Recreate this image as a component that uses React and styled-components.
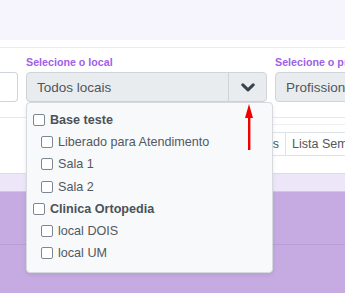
import React from 'react'
import styled, { createGlobalStyle } from 'styled-components'

const Global = createGlobalStyle`
  body {
    margin: 0;
    background: #fff;
    font-family: "Liberation Sans", Arial, sans-serif;
    overflow: hidden;
  }
`

const locais = [
  { grupo: 'Base teste', salas: ['Liberado para Atendimento', 'Sala 1', 'Sala 2'] },
  { grupo: 'Clinica Ortopedia', salas: ['local DOIS', 'local UM'] },
]

const Page = styled.div`
  width: 345px;
  height: 293px;
  overflow: hidden;
  position: relative;
`

const TopBand = styled.div`
  height: 40px;
  background: #f6f4fd;
`

const Card = styled.div`
  margin-top: 7px;
  border-top: 1px solid #eceaf2;
`

const Filters = styled.div`
  display: flex;
  gap: 8px;
  padding-top: 8px;
`

const Field = styled.div`
  display: flex;
  flex-direction: column;
  flex: 0 0 ${p => p.$w}px;
  position: relative;
`

const Label = styled.span`
  height: 14px;
  margin-bottom: 2px;
  font-size: 10.7px;
  font-weight: 700;
  color: #a060e8;
  white-space: nowrap;
`

const Input = styled.div`
  height: 28px;
  background: #fff;
  border: 1px solid #ced4da;
  border-left: none;
  border-radius: 0 4px 4px 0;
`

const SelectBox = styled.div`
  display: flex;
  align-items: center;
  height: 28px;
  background: #e9ecef;
  border: 1px solid #ced4da;
  border-radius: 4px;
  color: #4f565d;
  font-size: 13.5px;
  white-space: nowrap;
  overflow: hidden;
`

const SelectText = styled.span`
  flex: 1;
  padding-left: 10px;
`

const Caret = styled.span`
  display: flex;
  align-items: center;
  justify-content: center;
  width: 37px;
  height: 100%;
  border-left: 1px solid #ced4da;
`

const Menu = styled.div`
  position: absolute;
  top: 46px;
  left: 0;
  width: 239px;
  padding: 6px 0 8px 6px;
  background: #f8f9fa;
  border: 1px solid #d6d9dd;
  border-radius: 4px;
  box-shadow: 0 2px 4px rgba(0, 0, 0, 0.08);
  z-index: 2;
`

const Option = styled.label`
  display: flex;
  align-items: center;
  gap: 5px;
  height: 22.2px;
  padding-left: ${p => (p.$child ? 8 : 0)}px;
  font-size: 12.6px;
  font-weight: ${p => (p.$child ? 400 : 700)};
  color: ${p => (p.$child ? '#52585f' : '#4c5258')};
  white-space: nowrap;
`

const Box = styled.span`
  flex: 0 0 auto;
  width: 10px;
  height: 10px;
  border: 1px solid #7d8791;
  border-radius: 2px;
  background: #fff;
`

const Rule = styled.div`
  height: 15px;
  border-bottom: 1px solid #e6e8eb;
`

const TabBar = styled.div`
  display: flex;
  margin: 6px 0 0 180px;
  padding-top: 7px;
  border-top: 1px solid #eceef0;
`

const Tab = styled.div`
  flex: 0 0 auto;
  display: flex;
  align-items: center;
  justify-content: flex-end;
  width: ${p => (p.$w ? `${p.$w}px` : 'auto')};
  height: 24px;
  padding: 0 6px;
  box-sizing: border-box;
  border-top: 1px solid #dfe2e6;
  border-bottom: 1px solid #dfe2e6;
  border-right: 1px solid #dfe2e6;
  font-size: 12.5px;
  color: #51575d;
  white-space: nowrap;
`

const TableHead = styled.div`
  margin-top: 17px;
  height: 17px;
  background: #ede5f8;
  border-top: 1px solid #dedbe4;
  border-bottom: 1px solid #d3c4e8;
`

const Row = styled.div`
  height: 52px;
  background: #c6abe3;
  border-bottom: 1px solid #b99cd9;
`

const Arrow = styled.svg`
  position: absolute;
  left: 244px;
  top: 104px;
  z-index: 3;
`

export default function App() {
  return (
    <Page>
      <Global />
      <TopBand />
      <Card>
        <Filters>
          <Field $w={18}>
            <Label />
            <Input />
          </Field>
          <Field $w={241}>
            <Label>Selecione o local</Label>
            <SelectBox>
              <SelectText>Todos locais</SelectText>
              <Caret>
                <svg width="14" height="9" viewBox="0 0 14 9">
                  <polyline points="1.8,1.8 7,6.8 12.2,1.8" fill="none" stroke="#38434d" strokeWidth="3" strokeLinecap="round" strokeLinejoin="round" />
                </svg>
              </Caret>
            </SelectBox>
            <Menu>
              {locais.map(l => (
                <React.Fragment key={l.grupo}>
                  <Option>
                    <Box />
                    {l.grupo}
                  </Option>
                  {l.salas.map(s => (
                    <Option key={s} $child>
                      <Box />
                      {s}
                    </Option>
                  ))}
                </React.Fragment>
              ))}
            </Menu>
          </Field>
          <Field $w={120}>
            <Label>Selecione o profissional</Label>
            <SelectBox>
              <SelectText>Profissionais</SelectText>
            </SelectBox>
          </Field>
        </Filters>
        <Rule />
        <TabBar>
          <Tab $w={106}>Agendamentos</Tab>
          <Tab>Lista Semanal</Tab>
        </TabBar>
        <TableHead />
        <Row />
        <Row />
      </Card>
      <Arrow width="10" height="48" viewBox="0 0 10 48">
        <polygon points="5,0 9,14 1,14" fill="#f20000" />
        <rect x="4" y="12" width="2.4" height="34" fill="#f20000" />
      </Arrow>
    </Page>
  )
}
